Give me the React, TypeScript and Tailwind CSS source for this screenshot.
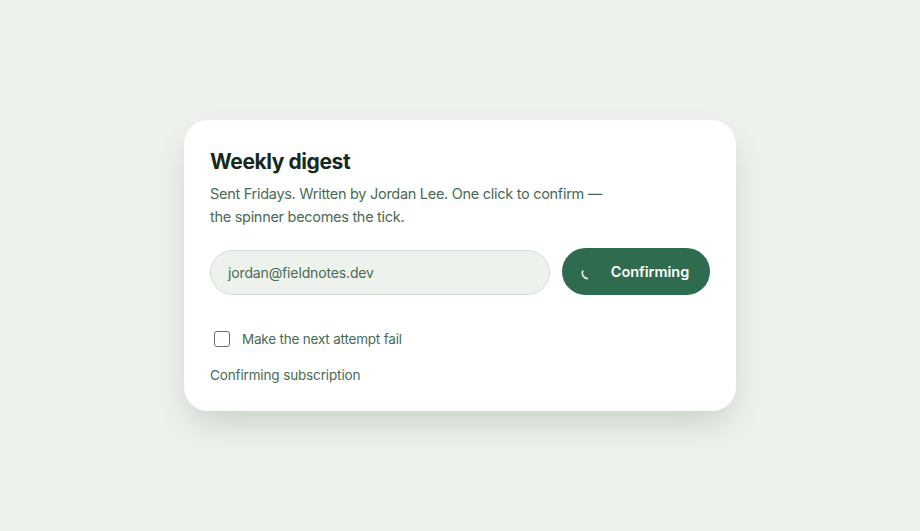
import React from "react";

export default function App() {
  return (
    <div
      className="min-h-screen w-full bg-[#eef2ec] flex items-center justify-center"
      style={{ fontFamily: "Inter, 'Noto Sans', sans-serif" }}
    >
      <div className="w-[552px] bg-white rounded-[24px] pt-[28px] pb-[26px] px-[26px] shadow-[0_16px_34px_-6px_rgba(40,70,50,0.2)]">
        {/* Heading */}
        <h1 className="text-[21px] leading-[28px] font-bold tracking-[-0.02em] text-[#15291d]">
          Weekly digest
        </h1>
        <p className="mt-[6px] max-w-[395px] text-[14.5px] leading-[23px] tracking-[-0.02em] text-[#4a6a55]">
          Sent Fridays. Written by Jordan Lee. One click to confirm — the spinner becomes the tick.
        </p>

        {/* Form row */}
        <div className="mt-[20px] flex items-center gap-3">
          <div className="flex-1 h-[45px] mt-[1px] rounded-full bg-[#eef2ec] border border-[#d5ded4] flex items-center px-[17px] text-[14px] tracking-[-0.01em] text-[#4a6a55]">
            jordan@fieldnotes.dev
          </div>
          <button className="h-[47px] w-[148px] rounded-full bg-[#2e6b4f] text-white text-[14.5px] font-semibold flex items-center justify-center gap-[16px] pr-[2px]">
            <svg width="14" height="14" viewBox="0 0 14 14" className="mt-[3px]">
              <path
                d="M1.8 5 A5.5 5.5 0 0 0 6.4 12.6"
                fill="none"
                stroke="#e6efe9"
                strokeWidth="1.6"
                strokeLinecap="round"
              />
            </svg>
            Confirming
          </button>
        </div>

        {/* Option */}
        <label className="mt-[34px] flex items-center gap-3 pl-1 text-[13.5px] leading-[20px] tracking-[-0.015em] text-[#4a6a55]">
          <span className="w-4 h-4 rounded-[3px] border-[1.5px] border-[#5d7564] bg-white" />
          Make the next attempt fail
        </label>

        <p className="mt-4 text-[13.5px] leading-[20px] tracking-[-0.01em] text-[#4a6a55]">
          Confirming subscription
        </p>
      </div>
    </div>
  );
}
